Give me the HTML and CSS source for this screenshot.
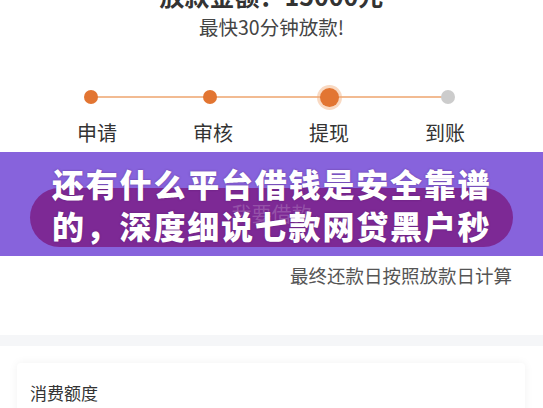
FILE: index.html
```html
<html>
  <head>
    <meta charset="utf-8">
    <title>放款进度</title>
    <link rel="stylesheet" href="styles.css">
  </head>
  <body>
    <section class="summary">
      <h2>放款金额：15000元</h2>
      <p>最快30分钟放款!</p>
    </section>
    <section class="steps">
      <div class="track">
        <span class="dot done"></span>
        <span class="dot done"></span>
        <span class="dot current"></span>
        <span class="dot"></span>
      </div>
      <div class="labels">
        <span>申请</span>
        <span>审核</span>
        <span>提现</span>
        <span>到账</span>
      </div>
    </section>
    <section class="banner">
      <div class="pill">我要借款</div>
      <div class="title">
        <span>还有什么平台借钱是安全靠谱</span>
        <span>的，深度细说七款网贷黑户秒</span>
      </div>
    </section>
    <p class="note">最终还款日按照放款日计算</p>
    <div class="divider"></div>
    <div class="card">
      <h3>消费额度</h3>
    </div>
  </body>
</html>
```
FILE: styles.css
```css
body {
  margin: 0;
  background: #fff;
  font-family: "Noto Sans CJK SC", "Noto Sans", sans-serif;
  color: #333;
  overflow: hidden;
}
.summary {
  margin-top: -20px;
  text-align: center;
}
.summary h2 {
  margin: 0;
  font-size: 25px;
  line-height: 30px;
  font-weight: bold;
  color: #333;
}
.summary p {
  margin: 4px 0 0;
  font-size: 19.5px;
  line-height: 26px;
  color: #444;
}
.steps {
  margin-top: 44px;
}
.track {
  position: relative;
  display: grid;
  grid-template-columns: repeat(4, 119px);
  justify-content: center;
  align-items: center;
  height: 26px;
  margin-left: -4px;
}
.track::before {
  content: "";
  position: absolute;
  left: 93px;
  right: 93px;
  top: 12px;
  height: 2px;
  background: #f2bb92;
}
.dot {
  position: relative;
  justify-self: center;
  width: 14px;
  height: 14px;
  border-radius: 50%;
  background: #cccccc;
}
.dot.done {
  background: #e27532;
}
.dot.current {
  width: 19px;
  height: 19px;
  background: #e27532;
  box-shadow: 0 0 0 3px rgba(242, 170, 120, 0.45);
}
.labels {
  display: grid;
  grid-template-columns: repeat(4, 116px);
  justify-content: center;
  margin-top: 9px;
  margin-left: -1px;
  font-size: 20px;
  line-height: 28px;
  color: #333;
  text-align: center;
}
.banner {
  display: grid;
  height: 104px;
  margin-top: 5px;
  background: #8763dc;
  overflow: hidden;
}
.pill {
  grid-area: 1 / 1;
  display: flex;
  align-items: center;
  justify-content: center;
  margin: 36px 30px 9px;
  padding-bottom: 8px;
  border-radius: 30px;
  background: #7d2995;
  font-size: 20px;
  color: rgba(255, 255, 255, 0.2);
}
.title {
  grid-area: 1 / 1;
  display: flex;
  flex-direction: column;
  padding: 10px 0 0 52px;
  font-size: 32px;
  line-height: 42px;
  letter-spacing: 1.8px;
  font-weight: 900;
  color: #fff;
  white-space: nowrap;
  text-shadow: 0 0 2px rgba(70, 20, 90, 0.5);
}
.note {
  margin: 6px 31px 0 0;
  font-size: 18.5px;
  line-height: 26px;
  color: #555;
  text-align: right;
}
.divider {
  height: 11px;
  margin-top: 47px;
  background: #f5f6f8;
}
.card {
  margin: 17px 18px 0 17px;
  padding: 18px 13px 20px;
  background: #fff;
  border-radius: 4px;
  box-shadow: 0 0 10px rgba(0, 0, 0, 0.06);
}
.card h3 {
  margin: 0;
  font-size: 17px;
  line-height: 24px;
  font-weight: normal;
  color: #333;
}
```
